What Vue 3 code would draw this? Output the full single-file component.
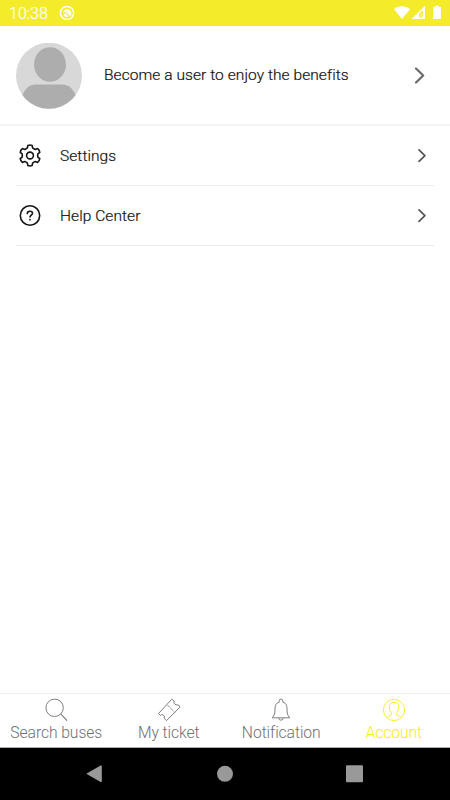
<script setup>
const rows = [
  { label: 'Settings', icon: 'gear' },
  { label: 'Help Center', icon: 'help' },
]
const tabs = [
  { label: 'Search buses', icon: 'search' },
  { label: 'My ticket', icon: 'ticket' },
  { label: 'Notification', icon: 'bell' },
  { label: 'Account', icon: 'account', active: true },
]
const polar = (r, deg) => {
  const a = (deg * Math.PI) / 180
  return `${(12 + r * Math.cos(a)).toFixed(2)},${(11.5 + r * Math.sin(a)).toFixed(2)}`
}
const gear =
  'M' +
  [0, 1, 2, 3, 4, 5]
    .map((i) => {
      const a = i * 60 - 90
      return `${polar(8, a - 19)} L${polar(10.3, a - 12)} Q${polar(10.9, a)} ${polar(10.3, a + 12)} L${polar(8, a + 19)} Q${polar(7.6, a + 30)} `
    })
    .join('') +
  polar(8, -109) +
  'Z'
</script>

<template>
  <div class="screen">
    <header class="status">
      <span class="clock">10:38</span>
      <svg class="app-mark" width="16" height="16" viewBox="0 0 16 16">
        <circle cx="8" cy="8" r="6.6" fill="none" stroke="#fff" stroke-width="1.5" />
        <path d="M4.2 7.2a4.2 4.2 0 1 1 6.8 4.2L6.7 6.8 4.9 8.2Z" fill="#fff" />
        <path d="M4.3 9.4L6.5 8l3.4 3.8a4 4 0 0 1-5.6-2.4Z" fill="#fff" />
        <path d="M3.9 9L6.6 7.2l5.2 5.6" fill="none" stroke="#f4eb2b" stroke-width="1" />
      </svg>
      <svg class="signals" width="50" height="16" viewBox="0 0 50 16">
        <path d="M0 4.2C4.4.4 11.5.4 16 4.2L8 14Z" fill="#fff" />
        <path d="M17.5 14L31 .8V14Z" fill="#fff" />
        <path d="M25.2 12.5V8.8l3.6-3.7v7.4Z" fill="#f4eb2b" />
        <path d="M27.2 8.5v4" stroke="#fff" stroke-width=".8" />
        <path d="M39 2h2V.8h4V2h2v12h-8Z" fill="#fff" />
      </svg>
    </header>

    <section class="profile">
      <svg width="66" height="66" viewBox="0 0 66 66">
        <defs><clipPath id="avatar"><circle cx="33" cy="32.7" r="33" /></clipPath></defs>
        <g clip-path="url(#avatar)">
          <rect width="66" height="66" fill="#d8d8d8" />
          <ellipse cx="34" cy="21.5" rx="16" ry="17.3" fill="#adadad" />
          <path d="M5 56.5Q9 41.5 20 41.5H46Q57 41.5 61 56.5V67H5Z" fill="#adadad" />
        </g>
      </svg>
      <span class="invite">Become a user to enjoy the benefits</span>
      <svg class="chevron" width="12" height="18" viewBox="0 0 12 18">
        <path d="M2 1.5l7.2 7L2 15.5" fill="none" stroke="#6a6a6a" stroke-width="2.2" stroke-linecap="round" stroke-linejoin="round" />
      </svg>
    </section>

    <main class="list">
      <div v-for="row in rows" :key="row.label" class="row">
        <svg class="row-icon" width="24" height="24" viewBox="0 0 24 24" fill="none" stroke="#151515" stroke-width="1.6" stroke-linejoin="round" stroke-linecap="round">
          <template v-if="row.icon === 'gear'">
            <path :d="gear" />
            <circle cx="12" cy="11.5" r="3.4" />
          </template>
          <template v-else>
            <circle cx="12" cy="11.5" r="9.7" />
            <path d="M9.3 9.6C9.3 6.4 14.5 6.5 14.5 9.3C14.5 11.1 12 11.1 12 13" />
            <path d="M12 15.5v.2" stroke-width="1.7" />
          </template>
        </svg>
        <span class="row-label">{{ row.label }}</span>
        <svg width="10" height="14" viewBox="0 0 10 14">
          <path d="M2 .9L7.9 6.6L2 12.3" fill="none" stroke="#555" stroke-width="1.7" stroke-linecap="round" stroke-linejoin="round" />
        </svg>
      </div>
    </main>

    <nav class="tabs">
      <div v-for="tab in tabs" :key="tab.label" class="tab" :class="[tab.icon, { active: tab.active }]">
        <svg width="24" height="24" viewBox="0 0 24 24" fill="none" stroke="currentColor" stroke-width=".9" stroke-linejoin="round">
          <template v-if="tab.icon === 'search'">
            <circle cx="10.6" cy="9.8" r="8.7" />
            <path d="M16.8 16l6.2 6.7" stroke-width="1.1" />
          </template>
          <template v-else-if="tab.icon === 'ticket'">
            <path d="M1.5 15.5L14.8 1.2L17 3.1Q16.3 6 19 6.8Q20.6 7.3 21.3 6.8L23 9.1L9.5 22.6L7.3 20.5Q8.2 17.3 5.7 16.8Q4.3 16.4 3.3 17.4Z" />
            <path d="M10.5 7.1l7.3 7.4" stroke-dasharray="3.3 1.2" />
          </template>
          <template v-else-if="tab.icon === 'bell'">
            <path d="M10.2 4.2V2.8a1.8 1.8 0 0 1 3.6 0v1.4M10.2 4.2C7.1 5 6 7.3 6 11C6 15.5 5.5 17.3 3.2 19.8H20.8C18.5 17.3 18 15.5 18 11C18 7.3 16.9 5 13.8 4.2M9.8 20a2.2 2.2 0 0 0 4.4 0" />
          </template>
          <template v-else>
            <circle cx="12" cy="12" r="10.6" />
            <path d="M4.8 19.7Q5.5 18.2 9.2 17.2V14.6Q7.4 12.7 7.2 9.2Q7.1 4.3 12 4.3Q16.9 4.3 16.8 9.2Q16.6 12.7 14.8 14.6V17.2Q18.5 18.2 19.2 19.7" />
          </template>
        </svg>
        <span class="tab-label">{{ tab.label }}</span>
      </div>
    </nav>

    <footer class="system">
      <svg width="18" height="20" viewBox="0 0 18 20"><path d="M.3 9.8L14.6 1.6Q15.8 1.1 15.8 2.1V17.5Q15.8 18.5 14.6 18Z" fill="#999" /></svg>
      <svg width="18" height="20" viewBox="0 0 18 20"><circle cx="9" cy="9.8" r="8" fill="#999" /></svg>
      <svg width="18" height="20" viewBox="0 0 18 20"><rect x="0" y="1.2" width="17" height="17" rx="1" fill="#999" /></svg>
    </footer>
  </div>
</template>

<style scoped>
.screen {
  width: 450px;
  height: 800px;
  display: flex;
  flex-direction: column;
  background: #fff;
  font-family: Roboto, sans-serif;
  color: #111;
  overflow: hidden;
}
svg { display: block; flex: none; }
span { white-space: nowrap; }
.status {
  height: 26px;
  box-sizing: border-box;
  padding: 0 8px 0 9px;
  display: flex;
  align-items: center;
  background: #f4eb2b;
  color: #fff;
}
.clock { width: 50px; font-size: 16px; font-weight: 300; -webkit-text-stroke: .2px #fff; line-height: 26px; padding-top: 2px; letter-spacing: 0; }
.signals { margin-left: auto; margin-right: -2px; margin-top: -1px; }
.profile {
  height: 100px;
  box-sizing: border-box;
  border-bottom: 2px solid #f3f3f3;
  padding: 1px 24px 0 16px;
  display: flex;
  align-items: center;
}
.invite { margin-left: 22px; padding-bottom: 2px; font-size: 15.5px; font-weight: 300; letter-spacing: .07px; -webkit-text-stroke: .2px #111; }
.chevron { margin-left: auto; }
.list { flex: 1; padding: 0 16px; }
.row {
  height: 60px;
  box-sizing: border-box;
  border-bottom: 1px solid #ececec;
  padding: 0 7px 0 2px;
  display: flex;
  align-items: center;
}
.row-label { flex: 1; margin-left: 18px; font-size: 15.5px; font-weight: 300; letter-spacing: .07px; -webkit-text-stroke: .2px #111; }
.tabs {
  height: 55px;
  box-sizing: border-box;
  border-top: 1px solid #f0f0f0;
  border-bottom: 1px solid #aaa;
  display: grid;
  grid-template-columns: repeat(4, 1fr);
}
.tab {
  padding-top: 4px;
  display: flex;
  flex-direction: column;
  align-items: center;
  color: #707070;
}
.tab.active { color: #f6ec20; }
.tab-label { font-size: 15.7px; font-weight: 300; line-height: 21px; letter-spacing: -.08px; }
.system {
  height: 52px;
  box-sizing: border-box;
  padding: 0 86px;
  display: flex;
  justify-content: space-between;
  align-items: center;
  background: #000;
}
</style>

<style>
body { background: #fff; }
</style>
